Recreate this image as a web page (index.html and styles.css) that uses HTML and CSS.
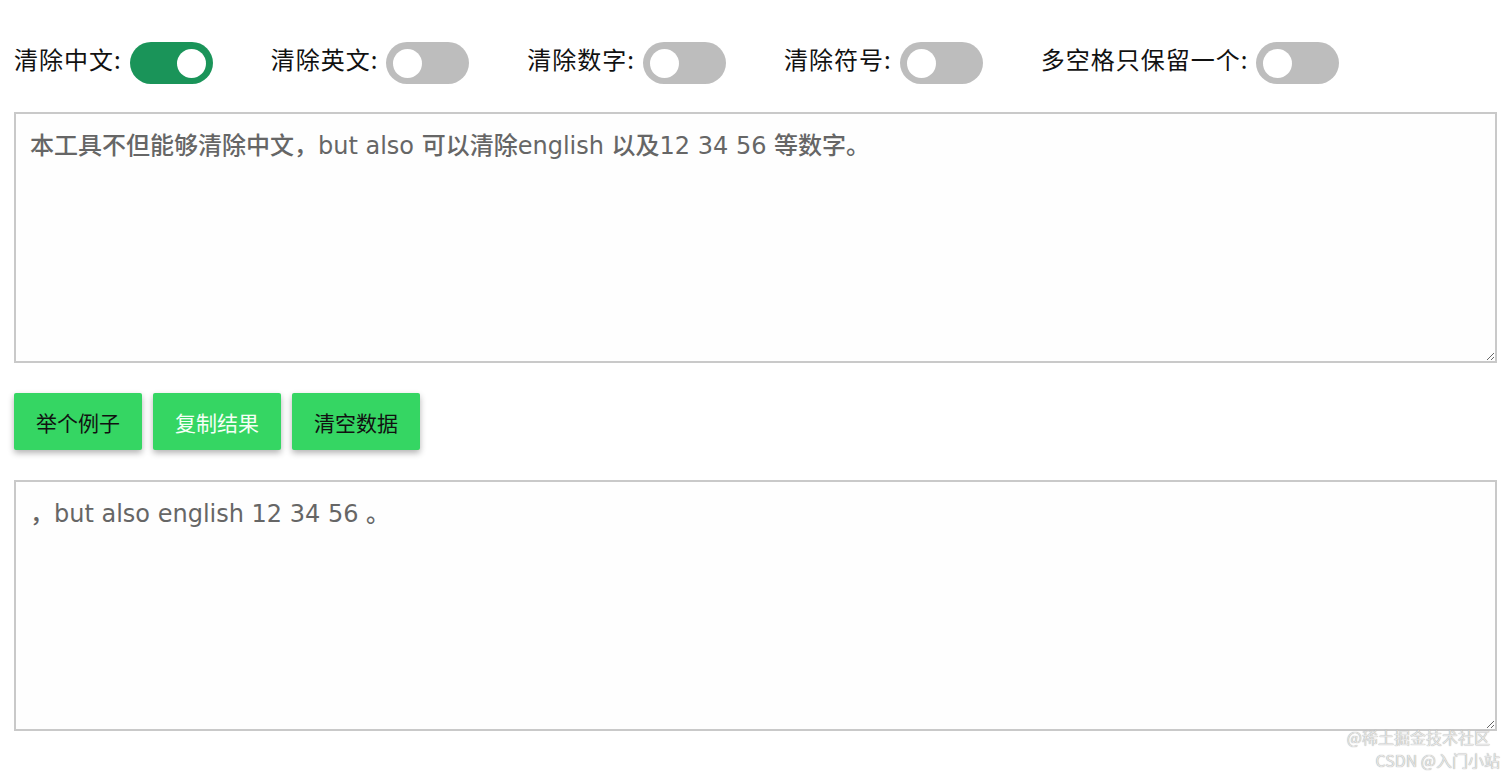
FILE: index.html
```html
<!DOCTYPE html>
<html lang="zh-CN">
<head>
<meta charset="utf-8">
<title>清除工具</title>
<link rel="stylesheet" href="styles.css">
</head>
<body>
<div class="page">
  <div class="options">
    <div class="opt"><span class="opt-label">清除中文:</span><span class="switch on"><span class="knob"></span></span></div>
    <div class="opt"><span class="opt-label">清除英文:</span><span class="switch"><span class="knob"></span></span></div>
    <div class="opt"><span class="opt-label">清除数字:</span><span class="switch"><span class="knob"></span></span></div>
    <div class="opt"><span class="opt-label">清除符号:</span><span class="switch"><span class="knob"></span></span></div>
    <div class="opt"><span class="opt-label">多空格只保留一个:</span><span class="switch"><span class="knob"></span></span></div>
  </div>
  <textarea class="box">本工具不但能够清除中文，but also 可以清除english 以及12 34 56 等数字。</textarea>
  <div class="actions">
    <button class="btn">举个例子</button>
    <button class="btn light">复制结果</button>
    <button class="btn">清空数据</button>
  </div>
  <textarea class="box">，but also english 12 34 56 。</textarea>
  <div class="watermark">
    <div class="wm1">@稀土掘金技术社区</div>
    <div class="wm2">CSDN @入门小站</div>
  </div>
</div>
</body>
</html>
```
FILE: styles.css
```css
html, body {
  margin: 0;
  padding: 0;
  background: #ffffff;
}
body {
  font-family: "DejaVu Sans", "Noto Sans CJK SC", sans-serif;
  color: #111;
}
.page {
  position: relative;
  padding: 42px 15px 0 14px;
  height: 733px;
}
.options {
  display: flex;
  align-items: center;
  gap: 58px;
  height: 42px;
}
.opt {
  display: flex;
  align-items: center;
  gap: 8px;
}
.opt-label {
  font-family: "Noto Sans CJK SC", sans-serif;
  font-size: 24px;
  letter-spacing: 1px;
  line-height: 30px;
  padding-bottom: 8px;
  color: #111;
}
.switch {
  display: flex;
  align-items: center;
  width: 83px;
  height: 42px;
  border-radius: 21px;
  background: #bdbdbd;
  padding: 0 7px;
  box-sizing: border-box;
}
.switch .knob {
  width: 29px;
  height: 29px;
  border-radius: 50%;
  background: #ffffff;
}
.switch.on {
  background: #1a9459;
  justify-content: flex-end;
}
.box {
  display: block;
  width: 100%;
  height: 251px;
  box-sizing: border-box;
  border: 2px solid #c9c9c9;
  background: #fefefe;
  padding: 16px 14px;
  font-family: "DejaVu Sans", "Noto Sans CJK SC", sans-serif;
  font-size: 24px;
  font-weight: 500;
  color: #666;
  line-height: 32px;
  resize: vertical;
  margin: 28px 0 0 0;
  outline: none;
}
.actions {
  display: flex;
  gap: 11px;
  margin-top: 30px;
}
.btn {
  width: 128px;
  height: 57px;
  border: none;
  border-radius: 2px;
  background: #35d663;
  box-shadow: 0 3px 6px rgba(0, 0, 0, 0.3);
  font-family: "Noto Sans CJK SC", sans-serif;
  font-size: 21px;
  color: #111;
  padding: 0;
}
.btn.light {
  color: #f4fff6;
}
.actions + .box {
  margin-top: 30px;
}
.watermark {
  position: absolute;
  right: 12px;
  top: 726px;
  text-align: right;
  font-family: "Noto Sans CJK SC", sans-serif;
  font-size: 16px;
  font-weight: 400;
  line-height: 23px;
  color: #e6e6e6;
  text-shadow: 0 0 1px #8a8a8a;
}
.wm1 {
  margin-right: 10px;
}
```
